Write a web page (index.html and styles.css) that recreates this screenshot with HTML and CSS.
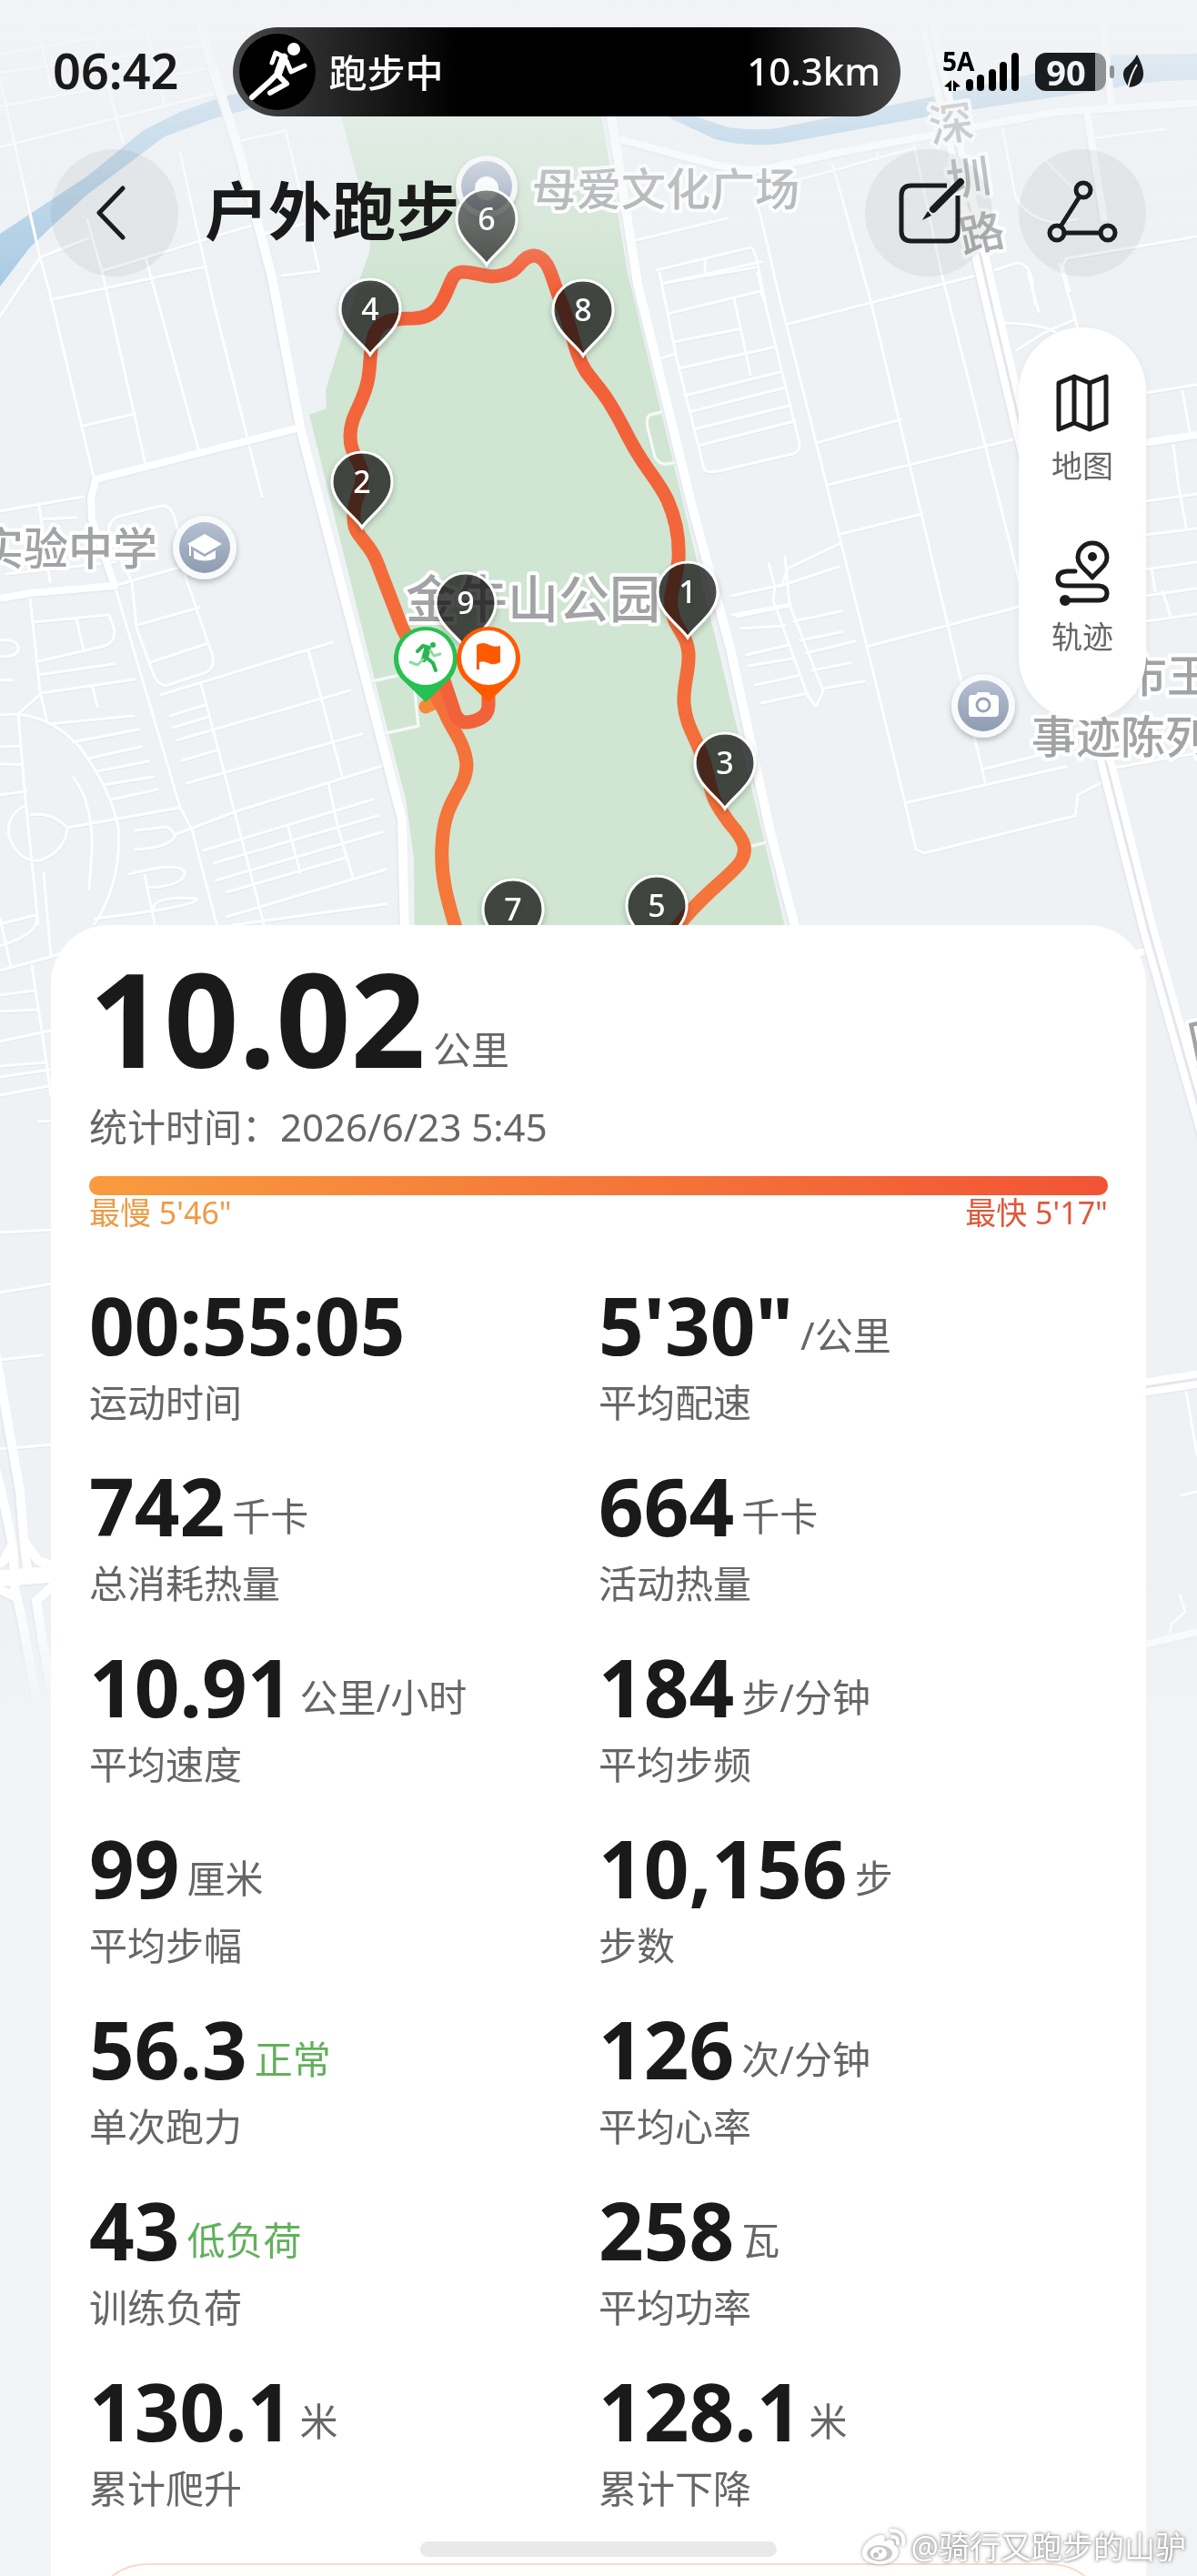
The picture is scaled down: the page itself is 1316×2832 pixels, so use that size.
FILE: index.html
```html
<!DOCTYPE html>
<html lang="zh-CN">
<head>
    <meta charset="UTF-8">
    <meta name="viewport" content="width=device-width, initial-scale=1.0">
    <title>户外跑步</title>
    <link rel="stylesheet" href="styles.css">
</head>
<body>
    <div class="screen">
        <!-- Map with the recorded track -->
        <svg class="map" viewBox="0 0 1316 1900" role="img" aria-label="跑步轨迹地图">
            <defs>
                <linearGradient id="fade-top" x1="0" y1="0" x2="0" y2="1">
                    <stop offset="0" stop-color="#f1f3f5"/>
                    <stop offset="0.25" stop-color="#f1f3f5" stop-opacity="0.7"/>
                    <stop offset="1" stop-color="#f1f3f5" stop-opacity="0"/>
                </linearGradient>
                <linearGradient id="fade-bottom" x1="0" y1="0" x2="0" y2="1">
                    <stop offset="0" stop-color="#f1f3f5" stop-opacity="0"/>
                    <stop offset="0.9" stop-color="#f1f3f5"/>
                </linearGradient>
                <linearGradient id="poi-fill" x1="0" y1="0" x2="0" y2="1">
                    <stop offset="0" stop-color="#b5c0d2"/>
                    <stop offset="1" stop-color="#8e9cb0"/>
                </linearGradient>
                <linearGradient id="track-fill" gradientUnits="userSpaceOnUse" x1="450" y1="1000" x2="640" y2="400">
                    <stop offset="0" stop-color="#f5793b"/>
                    <stop offset="1" stop-color="#f2603a"/>
                </linearGradient>
                <filter id="soft" x="-30%" y="-30%" width="160%" height="160%">
                    <feDropShadow dx="0" dy="3" stdDeviation="3" flood-color="#000" flood-opacity="0.25"/>
                </filter>
                <path id="pin" d="M0 49 C-7 37 -33 22 -33 -1 A33 33 0 0 1 33 -1 C33 22 7 37 0 49Z"/>
            </defs>

            <rect width="1316" height="1900" fill="#eef2f5"/>

            <g fill="#a9cbe4">
                <path d="M0 257 L38 232 L97 193 L158 143 L198 123 L240 108 L320 86 L340 100 L280 118 L236 130 L181 150 L97 213 L59 247 L32 273 L0 315Z"/>
                <path d="M740 110 L765 128 L800 140 Q830 144 854 141 L1022 107 L1140 80 L1182 63 Q1200 60 1316 59 V88 Q1260 88 1224 97 L1026 127 L858 158 Q820 162 786 153 L720 122Z"/>
            </g>
            <path fill="#d0e5d2" d="M366 60 L375 128 L394 200 Q410 240 406 277 L398 300 L358 429 L359 449 L340 456 L415 759 L446 878 L455 943 L456 1040 H868 L690 300 L650 60Z"/>

            <!-- Narrow streets -->
            <g class="street">
                <path d="M0 117 L231 75 M0 162 L240 102 M0 87 L44 283 L0 348 M44 283 L56 327 L103 525 M44 283 L97 262 M96 242 L112 298 L160 511 M112 298 L276 248 M160 283 L219 497 M198 168 L234 330 L288 546 M55 330 L227 293 M101 27 L135 157 M162 33 L181 117 M40 25 L56 95 M92 468 L149 455"/>
                <path d="M0 60 L215 22 M0 80 L225 50 M259 156 L314 144 L351 298 L310 303 M288 258 L335 246 M245 30 Q270 10 292 36 L300 60"/>
                <path d="M0 562 L92 546 M43 556 L55 640 M45 571 L84 569 M7 631 L126 618 M126 644 L198 888 L211 912 L238 1016 M126 644 L200 623 L234 722 Q236 736 225 740 L182 754 Q172 752 168 740 L150 690 L145 640 L120 590 Q118 572 130 568 L178 556 Q188 556 192 570 L200 600 M152 687 L219 668 M166 728 L227 708"/>
                <path d="M33 658 L44 760 L52 795 M37 684 L120 676 L126 694 Q126 706 116 710 L43 727 M84 680 L92 716 M43 742 L125 730 M0 748 L14 748 M0 704 Q20 702 20 714 Q20 722 0 722 M46 762 L148 747 M102 756 L107 777 M46 762 L20 785 L28 880 L42 1016 M0 786 Q50 780 88 822 Q122 868 130 910 Q134 970 104 1016 M54 796 L147 787 M80 816 L152 802 M97 834 L155 821 M107 848 L163 837 M114 863 L169 854 M123 879 L173 868 M0 821 L24 820 M0 840 L26 841 M0 874 L29 870 M81 855 Q106 890 100 950 L98 978"/>
                <path d="M29 885 Q6 896 10 920 Q20 948 44 946 Q72 936 74 910 Q56 892 34 896 M74 910 L198 888 M149 913 L184 909 L193 918 Q188 932 149 934 M142 961 Q200 946 203 960 Q202 974 162 976 M159 962 L170 1016 M168 1000 Q170 984 216 988 Q222 996 104 1010"/>
                <path d="M177 764 L366 706 M194 814 L385 759 M206 861 L398 807 M194 917 L260 892 L421 842 M339 715 L376 853 M221 752 L290 1016 M187 787 L226 775 M190 800 L230 788 M201 836 L241 824 M361 861 L372 912 L388 965 M224 935 L410 879 M235 949 L415 897 M237 968 L420 915 M317 910 L330 960 M249 981 L380 943 M249 1008 L424 956 M256 1017 L424 994"/>
                <path class="on-park" d="M408 749 L440 742 M424 806 L460 798 L456 760"/>
                <path d="M725 300 L744 395 L774 516 Q776 520 790 518 L872 499 Q880 496 879 488 L833 300 M731 311 L830 294 M734 345 L837 320 M741 376 L812 362 M747 405 L850 382 M753 435 L858 409 M758 453 L864 426 M763 472 L868 446 M768 490 L874 463 M807 328 L825 412 M727 394 L742 389"/>
                <path d="M722 297 L826 272 Q832 276 840 330 L836 320 M728 312 L836 288 M775 286 V302 M700 264 L800 240 M832 220 L860 340 M850 300 L888 450 L953 711 L995 883 L1007 934 L1016 938 L1182 897 L1185 874 L1216 858 M915 180 L957 330 L1083 860 M1005 160 L1035 300 L1121 640 M864 357 L1077 302 M898 487 L991 461 M911 533 L1119 482 M925 587 L1014 565 M953 711 L1121 667 M995 883 L1172 843 M1080 846 L1160 826 M870 200 L1005 163 M965 168 V175"/>
                <path d="M805 655 L860 643 L866 625 L925 597 M805 676 L870 664 M845 620 L852 645 L850 660 L888 765 L897 777 L905 760 L868 665 L863 612 M810 678 L869 666 M815 691 L863 688 M821 720 L868 709 M823 732 L872 724 M831 753 L877 743 M837 773 L889 762 M873 683 L925 672 M880 704 L925 695 M887 718 L940 705 M893 737 L935 729 M905 757 L950 749 M856 645 L922 623"/>
                <path d="M1095 355 Q1140 355 1160 365 M1118 385 L1148 366 L1180 352 M1130 300 L1142 343 M1165 290 L1186 365 M1102 140 L1116 215 Q1128 240 1160 245 L1184 241 M1150 177 L1180 208 M1202 152 L1281 142 M1176 320 L1168 293 L1173 284 L1316 260 M1094 297 L1118 289 Q1130 290 1134 305 L1138 335"/>
                <path d="M1260 432 L1316 423 M1300 430 L1308 476 M1290 490 L1295 530 L1304 580 M1260 551 L1316 543 M1260 588 L1316 581 M1260 626 L1316 618 M1260 655 L1316 647 M1266 625 L1270 650 M1278 650 L1287 678 M1260 683 L1316 675 M1220 845 L1316 828"/>
                <path class="on-park" d="M736 451 L714 456 Q710 460 712 470 L720 502 Q724 510 732 510 L746 508"/>
                <path class="on-park" d="M818 932 L850 924"/>
                <path d="M0 1016 L40 1006 Q46 1026 0 1040 M12 1063 L0 1010 M0 1067 L56 1052 L84 1042 M35 1062 L46 1134 L56 1205 M0 1094 L38 1089 M0 1112 L41 1110 M0 1145 L56 1133 M0 1172 L52 1168 M0 1184 L56 1176 M0 1204 L54 1194 M48 960 L56 1052 M42 1233 L60 1232 M0 1355 L60 1352 M0 1421 L60 1411 M0 1495 L47 1490 M0 1593 L60 1588"/>
                <path d="M1304 1530 L1316 1600 M1299 1644 L1316 1640 M1297 1754 L1303 1772 L1288 1786 L1286 1796"/>
            </g>

            <!-- Main roads -->
            <g class="road">
                <path d="M219 20 L227 53 L261 160 L299 305 L330 470 L372 631 L423 828 L442 901 L445 1030"/>
                <path d="M656 60 L673 133 L701 312 L761 557 L803 713 L847 915 L877 1030"/>
                <path class="medium" d="M330 470 L105 527 L100 548 L101 571 L126 644 L33 652 L0 658"/>
                <path class="medium" d="M681 153 L782 180 Q820 190 845 185 L925 167 L1161 123 L1316 113 M1195 123 L1214 243 M1212 20 L1222 118 M1256 487 L1316 478"/>
                <path class="medium" d="M1250 1048 L1276 1042 M1250 1810 L1316 1794"/>
            </g>
            <g class="wide">
                <path d="M1018 20 L1089 330 L1122 470 L1218 846 L1262 1020 L1330 1260 M1240 1528 L1330 1514"/>
            </g>
            <path class="wide-line" d="M1018 20 L1089 330 L1122 470 L1218 846 L1262 1020 L1330 1260 M1240 1528 L1330 1514"/>
            <!-- Interchange at the left edge -->
            <g class="ramp">
                <path d="M-6 1480 L8 1560 L22 1640 L27 1700 L32 1740 M27 1695 L42 1716 L66 1724 M-6 1610 L6 1660 L14 1700 L16 1740 M12 1700 L4 1716 L-8 1724 M14 1736 L24 1780 L48 1910 M64 1738 L40 1760 L46 1800 L64 1900 M-8 1744 L18 1756"/>
                <path class="ramp-cross" d="M-8 1736 L66 1730"/>
            </g>

            <!-- Place names -->
            <g class="place">
                <text x="-23" y="621">实验中学</text>
                <text x="585" y="226">母爱文化广场</text>
                <text x="1234" y="761">市王</text>
                <text x="1134" y="828">事迹陈列</text>
                <text class="place-big" x="446" y="679">金牛山公园</text>
                <text transform="translate(1024 157) rotate(-8)">深</text>
                <text transform="translate(1043 217) rotate(-8)">圳</text>
                <text transform="translate(1059 279) rotate(-12)">路</text>
                <text transform="translate(1311 1164) rotate(-12)">同</text>
            </g>
            <g class="poi" filter="url(#soft)">
                <circle cx="225" cy="602" r="35"/>
                <circle cx="535" cy="205" r="34"/>
                <circle cx="1081" cy="776" r="35"/>
            </g>
            <g fill="url(#poi-fill)">
                <circle cx="225" cy="602" r="28"/>
                <circle cx="535" cy="205" r="28"/>
                <circle cx="1081" cy="776" r="28"/>
            </g>
            <g fill="#fff">
                <path d="M225 587 L244 598 L225 609 L206 598Z M213 605 L225 612 L237 605 V614 Q225 619 213 614Z M208 599 H210 V611 H208Z"/>
                <circle cx="535" cy="207" r="13"/>
                <path d="M1068 764 H1073 L1075 761 H1087 L1089 764 H1094 Q1098 764 1098 768 V784 Q1098 788 1094 788 H1068 Q1065 788 1065 784 V768 Q1065 764 1068 764Z"/>
            </g>
            <circle cx="1081" cy="775" r="7" fill="none" stroke="#97a5b8" stroke-width="3"/>

            <!-- Track -->
            <g class="track">
                <path stroke="#f5883b" d="M468 777 L482 770"/>
                <path stroke="url(#track-fill)" d="M504 1030 C492 990 484 965 486 930 C488 875 513 870 513 840 C511 815 495 800 490 785 L442 690 L414 617 C405 594 389 590 389 571 C388 545 400 540 398 520 C396 505 385 500 385 480 C385 455 400 445 405 415 C408 395 406 390 410 373 C414 355 425 350 455 350 C485 349 488 325 497 307 C504 292 520 302 541 304 C575 302 568 283 587 281 C605 282 607 310 618 335 C632 370 630 385 644 408 C660 430 665 430 690 479 C708 515 722 525 734 550 C745 575 747 595 746 615 C743 640 736 650 738 667 C740 690 755 695 757 718 C758 740 751 750 752 773 C754 800 766 810 775 840 C784 880 785 882 803 906 C820 925 822 935 814 948 C800 966 770 985 744 1020"/>
                <path stroke="#f2623a" d="M487 745 L500 784 Q504 795 514 794 Q536 791 537 776 V765"/>
            </g>

            <!-- Kilometre pins -->
            <g class="pins" filter="url(#soft)">
                <g transform="translate(535 242)"><use href="#pin"/><text y="11">6</text></g>
                <g transform="translate(407 341)"><use href="#pin"/><text y="11">4</text></g>
                <g transform="translate(641 342)"><use href="#pin"/><text y="11">8</text></g>
                <g transform="translate(398 531)"><use href="#pin"/><text y="11">2</text></g>
                <g transform="translate(512 664)"><use href="#pin"/><text y="11">9</text></g>
                <g transform="translate(756 652)"><use href="#pin"/><text y="11">1</text></g>
                <g transform="translate(797 840)"><use href="#pin"/><text y="11">3</text></g>
                <g transform="translate(722 997)"><use href="#pin"/><text y="11">5</text></g>
                <g transform="translate(564 1001)"><use href="#pin"/><text y="11">7</text></g>
            </g>
            <g transform="translate(468 723)">
                <path d="M0 49 L-28 22 A35 35 0 1 1 28 22Z" fill="#27c052"/>
                <circle r="30" fill="#fff"/>
                <circle cx="8" cy="-14" r="3" fill="#27b84e"/>
                <path d="M-9 -7 L-3 -13 L4 -11 L1 0 L8 6 L11 14" fill="none" stroke="#27b84e" stroke-width="4" stroke-linecap="round" stroke-linejoin="round"/>
                <path d="M1 -9 L-2 2" stroke="#27b84e" stroke-width="6" stroke-linecap="round"/>
                <path d="M5 -8 L9 -2 L16 -4 M-3 2 L-9 8 L-17 5" fill="none" stroke="#8edba4" stroke-width="3" stroke-linecap="round" stroke-linejoin="round"/>
            </g>
            <g transform="translate(537 723)">
                <path d="M0 49 L-28 22 A35 35 0 1 1 28 22Z" fill="#ff5a00"/>
                <circle r="30" fill="#fff"/>
                <path d="M-13 13 V-14 Q-6 -18 1 -14 Q7 -11 13 -13 V5 Q6 9 0 6 Q-6 3 -10 5 V13Z" fill="#ff5a00"/>
            </g>

            <rect width="1316" height="320" fill="url(#fade-top)"/>
            <rect y="1740" width="1316" height="160" fill="url(#fade-bottom)"/>
        </svg>

        <div class="status-bar">
            <span class="clock">06:42</span>
            <div class="live-pill">
                <svg class="live-icon" viewBox="0 0 84 84" aria-hidden="true">
                    <circle cx="42" cy="42" r="42" fill="#000"/>
                    <circle cx="60" cy="17" r="7" fill="#fff"/>
                    <g fill="none" stroke="#fff" stroke-linecap="round" stroke-linejoin="round">
                        <path stroke-width="5" d="M36 32 L40 21 L50 26"/>
                        <path stroke-width="9" d="M49 26 L43 43"/>
                        <path stroke-width="5" d="M52 30 L57 42 L72 35"/>
                        <path stroke-width="6" d="M43 43 L33 53 L14 70"/>
                        <path stroke-width="6" d="M42 45 L52 55 L34 65"/>
                    </g>
                </svg>
                <span>跑步中</span>
                <span class="live-distance">10.3km</span>
            </div>
            <div class="status-icons">
                <svg class="signal" viewBox="0 0 84 44" aria-hidden="true">
                    <path d="M2 38 L10 31 V43 H7 V39Z M20 38 L12 31 V43 H15 V39Z"/>
                    <rect x="26" y="30" width="8" height="13" rx="4"/>
                    <rect x="38" y="25" width="8" height="18" rx="4"/>
                    <rect x="51" y="19" width="8" height="24" rx="4"/>
                    <rect x="63" y="11" width="8" height="32" rx="4"/>
                    <rect x="76" y="1" width="8" height="42" rx="4"/>
                    <text x="0" y="21">5A</text>
                </svg>
                <div class="battery">90</div>
                <svg class="leaf" viewBox="0 0 24 38" aria-hidden="true">
                    <path d="M16 0 Q27 20 21 29 Q17 35 7 36 L5 33 Q-2 22 3 15 Q12 8 16 0Z"/>
                    <path d="M16 11 Q9 22 6 37" fill="none" stroke="#eef2f5" stroke-width="2"/>
                </svg>
            </div>
        </div>

        <header class="header">
            <button class="round-button" type="button" aria-label="返回">
                <svg viewBox="0 0 72 72" aria-hidden="true"><path d="M45 9 L19 36 L45 63"/></svg>
            </button>
            <h1>户外跑步</h1>
            <button class="round-button" type="button" aria-label="编辑">
                <svg viewBox="0 0 72 72" aria-hidden="true">
                    <path stroke-linecap="butt" d="M56 6 H17 Q6 6 6 17 V56 Q6 67 17 67 H57 Q68 67 68 56 V17"/>
                    <path stroke-width="8" d="M71 2 L41 32"/>
                    <path class="solid" d="M35 34 L39 39 L29 44Z"/>
                </svg>
            </button>
            <button class="round-button" type="button" aria-label="分享">
                <svg viewBox="0 0 72 72" aria-hidden="true">
                    <circle cx="37" cy="11" r="8"/>
                    <circle cx="8" cy="58" r="8"/>
                    <circle cx="64" cy="58" r="8"/>
                    <path d="M33 18 L12 51 M16 58 H56"/>
                </svg>
            </button>
        </header>

        <div class="map-tools">
            <button type="button">
                <svg viewBox="0 0 60 68" aria-hidden="true">
                    <path d="M4 13 L21 6 L38 13 L56 6 V57 L38 64 L21 57 L4 64Z M21 6 V57 M38 13 V64"/>
                </svg>
                地图
            </button>
            <button type="button">
                <svg viewBox="0 2 60 68" aria-hidden="true">
                    <path d="M41 41 C35 33 25 28 25 19 A16 16 0 0 1 57 19 C57 28 47 33 41 41Z"/>
                    <circle class="solid" cx="41" cy="18" r="5"/>
                    <path d="M22 34 H13 Q3 35 3 42 Q3 50 12 50 H48 Q57 51 57 58 Q57 66 48 66 H12"/>
                    <circle class="solid" cx="11" cy="66" r="6"/>
                </svg>
                轨迹
            </button>
        </div>

        <main class="card">
            <p class="value value-large">10.02<span class="unit">公里</span></p>
            <p class="date">统计时间：2026/6/23 5:45</p>
            <div class="pace-bar"></div>
            <div class="pace-range">
                <span class="slowest">最慢 5'46"</span>
                <span class="fastest">最快 5'17"</span>
            </div>

            <div class="stats">
                <div>
                    <p class="value">00:55:05</p>
                    <p class="name">运动时间</p>
                </div>
                <div>
                    <p class="value">5'30"<span class="unit">/公里</span></p>
                    <p class="name">平均配速</p>
                </div>
                <div>
                    <p class="value">742<span class="unit">千卡</span></p>
                    <p class="name">总消耗热量</p>
                </div>
                <div>
                    <p class="value">664<span class="unit">千卡</span></p>
                    <p class="name">活动热量</p>
                </div>
                <div>
                    <p class="value">10.91<span class="unit">公里/小时</span></p>
                    <p class="name">平均速度</p>
                </div>
                <div>
                    <p class="value">184<span class="unit">步/分钟</span></p>
                    <p class="name">平均步频</p>
                </div>
                <div>
                    <p class="value">99<span class="unit">厘米</span></p>
                    <p class="name">平均步幅</p>
                </div>
                <div>
                    <p class="value">10,156<span class="unit">步</span></p>
                    <p class="name">步数</p>
                </div>
                <div>
                    <p class="value">56.3<span class="unit good">正常</span></p>
                    <p class="name">单次跑力</p>
                </div>
                <div>
                    <p class="value">126<span class="unit">次/分钟</span></p>
                    <p class="name">平均心率</p>
                </div>
                <div>
                    <p class="value">43<span class="unit good">低负荷</span></p>
                    <p class="name">训练负荷</p>
                </div>
                <div>
                    <p class="value">258<span class="unit">瓦</span></p>
                    <p class="name">平均功率</p>
                </div>
                <div>
                    <p class="value">130.1<span class="unit">米</span></p>
                    <p class="name">累计爬升</p>
                </div>
                <div>
                    <p class="value">128.1<span class="unit">米</span></p>
                    <p class="name">累计下降</p>
                </div>
            </div>

            <div class="next-panel"><div class="next-panel-box"></div></div>
        </main>

        <div class="home-indicator"></div>
        <div class="watermark">
            <svg viewBox="0 0 50 42" aria-hidden="true">
                <path fill="#fff" d="M1 28 C1 17 15 7 23 8 C27 9 26 13 25 15 C31 12 37 13 36 19 C45 22 42 40 20 40 C8 40 1 35 1 28Z"/>
                <ellipse cx="20" cy="28" rx="14" ry="9" fill="#c9c9c9"/>
                <ellipse cx="19" cy="28" rx="9" ry="7" fill="#fff"/>
                <circle cx="16" cy="30" r="3" fill="#c2c2c2"/>
                <circle cx="21" cy="26" r="2" fill="#c2c2c2"/>
                <path fill="none" stroke="#fff" stroke-width="4" stroke-linecap="round" d="M33 3 Q48 3 46 18 M34 10 Q41 10 40 17"/>
            </svg>
            @骑行又跑步的山驴
        </div>
    </div>
</body>
</html>
```
FILE: styles.css
```css
* {
    box-sizing: border-box;
}

body {
    margin: 0;
    background-color: #f1f3f5;
    color: #1a1a1a;
    font-family: "Noto Sans", "Noto Sans CJK SC", sans-serif;
}

h1, p {
    margin: 0;
}

button {
    border: none;
    padding: 0;
    font-family: inherit;
    cursor: pointer;
}

.screen {
    position: relative;
    display: flex;
    flex-direction: column;
    overflow: hidden;
}

/* Map */
.map {
    position: absolute;
    top: 0;
    left: 0;
    width: 100%;
}

.street {
    fill: none;
    stroke: #fff;
    stroke-width: 3;
    stroke-linecap: round;
    stroke-linejoin: round;
    filter: drop-shadow(0 1px 0 #e3e6ea);
}

.street .on-park {
    stroke: #f6faf6;
}

.road {
    fill: none;
    stroke: #fff;
    stroke-width: 10;
    stroke-linejoin: round;
    filter: drop-shadow(-1px 1px 1px #dfe2e8);
}

.road .medium {
    stroke-width: 8;
}

.wide {
    fill: none;
    stroke: #fff;
    stroke-width: 19;
    filter: drop-shadow(-1px 1px 1px #dfe2e8);
}

.wide-line {
    fill: none;
    stroke: #e4e6eb;
    stroke-width: 3;
}

.ramp {
    fill: none;
    stroke: #fff;
    stroke-width: 10;
    filter: drop-shadow(-1px 1px 1px #dfe2e8);
}

.ramp-cross {
    stroke-width: 18;
}

.place {
    fill: #a2a3a5;
    stroke: #fff;
    stroke-width: 8;
    stroke-linejoin: round;
    paint-order: stroke;
    font-size: 49px;
    font-weight: 500;
    font-family: "Noto Sans CJK SC", sans-serif;
}

.place .place-big {
    font-size: 56px;
}

.poi {
    fill: #f8fafb;
}

.track {
    fill: none;
    stroke-width: 15;
    stroke-linecap: round;
    stroke-linejoin: round;
}

.pins use {
    fill: rgba(15, 15, 15, 0.7);
    stroke: #fff;
    stroke-width: 3;
}

.pins text {
    fill: #fff;
    font-size: 34px;
    font-weight: 500;
    text-anchor: middle;
}

/* Status bar */
.status-bar {
    position: relative;
    display: flex;
    align-items: center;
    padding: 30px 58px 0;
}

.clock {
    padding-bottom: 4px;
    font-size: 54px;
    font-weight: 600;
    line-height: 94px;
}

.live-pill {
    flex: 1;
    display: flex;
    align-items: center;
    gap: 14px;
    height: 98px;
    margin: 0 46px 0 60px;
    padding: 0 22px 0 7px;
    border-radius: 49px;
    background: linear-gradient(90deg, #4a4a4a 0, #2b2b2b 90px, #000 250px, #000 calc(100% - 170px), #444 100%);
    color: #fff;
    font-size: 42px;
    font-weight: 500;
}

.live-pill span {
    padding-bottom: 4px;
}

.live-icon {
    width: 84px;
    height: 84px;
}

.live-distance {
    margin-left: auto;
}

.status-icons {
    display: flex;
    align-items: center;
    gap: 18px;
}

.signal {
    width: 84px;
    height: 44px;
    overflow: visible;
}

.signal text {
    font-size: 28px;
    font-weight: 700;
}

.battery {
    position: relative;
    width: 78px;
    height: 42px;
    padding-right: 10px;
    border-radius: 12px;
    background: linear-gradient(90deg, #1a1c1e 66px, #8f9294 66px);
    color: #eef4f8;
    font-size: 38px;
    font-weight: 700;
    line-height: 42px;
    text-align: center;
}

.battery::after {
    content: "";
    position: absolute;
    top: 14px;
    right: -9px;
    width: 5px;
    height: 14px;
    border-radius: 3px;
    background-color: #8f9294;
}

.leaf {
    width: 24px;
    height: 38px;
    fill: #1a1c1e;
}

/* Header */
.header {
    position: relative;
    display: flex;
    align-items: center;
    gap: 29px;
    margin-top: 36px;
    padding: 0 56px;
}

.header h1 {
    flex: 1;
    padding-bottom: 4px;
    font-size: 70px;
    font-weight: 700;
    line-height: 96px;
}

.round-button {
    display: flex;
    align-items: center;
    justify-content: center;
    width: 140px;
    height: 140px;
    border-radius: 50%;
    background-color: rgba(0, 0, 0, 0.05);
}

.round-button svg {
    width: 72px;
    height: 72px;
    overflow: visible;
    fill: none;
    stroke: #1a1c1e;
    stroke-width: 5;
    stroke-linecap: round;
    stroke-linejoin: round;
}

.round-button .solid,
.map-tools .solid {
    fill: #1a1c1e;
    stroke: none;
}

/* Floating map tools */
.map-tools {
    position: relative;
    align-self: flex-end;
    display: flex;
    flex-direction: column;
    align-items: center;
    gap: 54px;
    width: 140px;
    margin: 56px 56px 0 0;
    padding: 48px 0 62px;
    border-radius: 70px;
    background-color: #fff;
    box-shadow: 0 2px 8px rgba(0, 0, 0, 0.06);
}

.map-tools button {
    display: flex;
    flex-direction: column;
    align-items: center;
    gap: 6px;
    background: none;
    color: #666;
    font-size: 34px;
    line-height: 60px;
}

.map-tools svg {
    width: 60px;
    height: 68px;
    overflow: visible;
    fill: none;
    stroke: #1a1c1e;
    stroke-width: 5;
    stroke-linecap: round;
    stroke-linejoin: round;
}

/* Result card */
.card {
    position: relative;
    margin: 225px 56px 0;
    padding: 21px 42px 0;
    border-radius: 64px 64px 0 0;
    background-color: #fff;
}

.value {
    display: flex;
    align-items: flex-end;
    gap: 8px;
    font-size: 87px;
    font-weight: 700;
    line-height: 100px;
}

.value-large {
    font-size: 144px;
    line-height: 160px;
}

.unit {
    padding-bottom: 8px;
    color: #666;
    font-size: 42px;
    font-weight: 400;
    line-height: 60px;
}

.value-large .unit {
    padding-bottom: 14px;
}

.good {
    color: #62b05c;
}

.date {
    margin-top: 11px;
    color: #666;
    font-size: 42px;
    line-height: 60px;
}

.pace-bar {
    height: 21px;
    margin-top: 24px;
    border-radius: 10px;
    background: linear-gradient(90deg, #f99b3e, #f15435);
}

.pace-range {
    display: flex;
    justify-content: space-between;
    font-size: 34px;
    line-height: 38px;
}

.slowest {
    color: #ee9a45;
}

.fastest {
    color: #e0573a;
}

.stats {
    display: grid;
    grid-template-columns: 1fr 1fr;
    row-gap: 33px;
    margin-top: 54px;
}

.name {
    margin-top: 6px;
    color: #666;
    font-size: 42px;
    line-height: 60px;
}

/* Only the top edge of the next panel is in view */
.next-panel {
    height: 14px;
    margin-top: 52px;
    overflow: hidden;
}

.next-panel-box {
    height: 140px;
    border: 2px solid #f5dccd;
    border-radius: 64px;
}

.home-indicator {
    position: absolute;
    bottom: 21px;
    left: 50%;
    width: 392px;
    height: 17px;
    margin-left: -196px;
    border-radius: 9px;
    background-color: #e9e9e9;
}

.watermark {
    position: absolute;
    right: 12px;
    bottom: 8px;
    display: flex;
    align-items: center;
    gap: 4px;
    color: #fff;
    font-size: 34px;
    line-height: 48px;
    text-shadow: 0 0 3px #888, 0 0 5px #999;
}

.watermark svg {
    width: 50px;
    height: 42px;
    filter: drop-shadow(0 0 2px #999);
}
```
